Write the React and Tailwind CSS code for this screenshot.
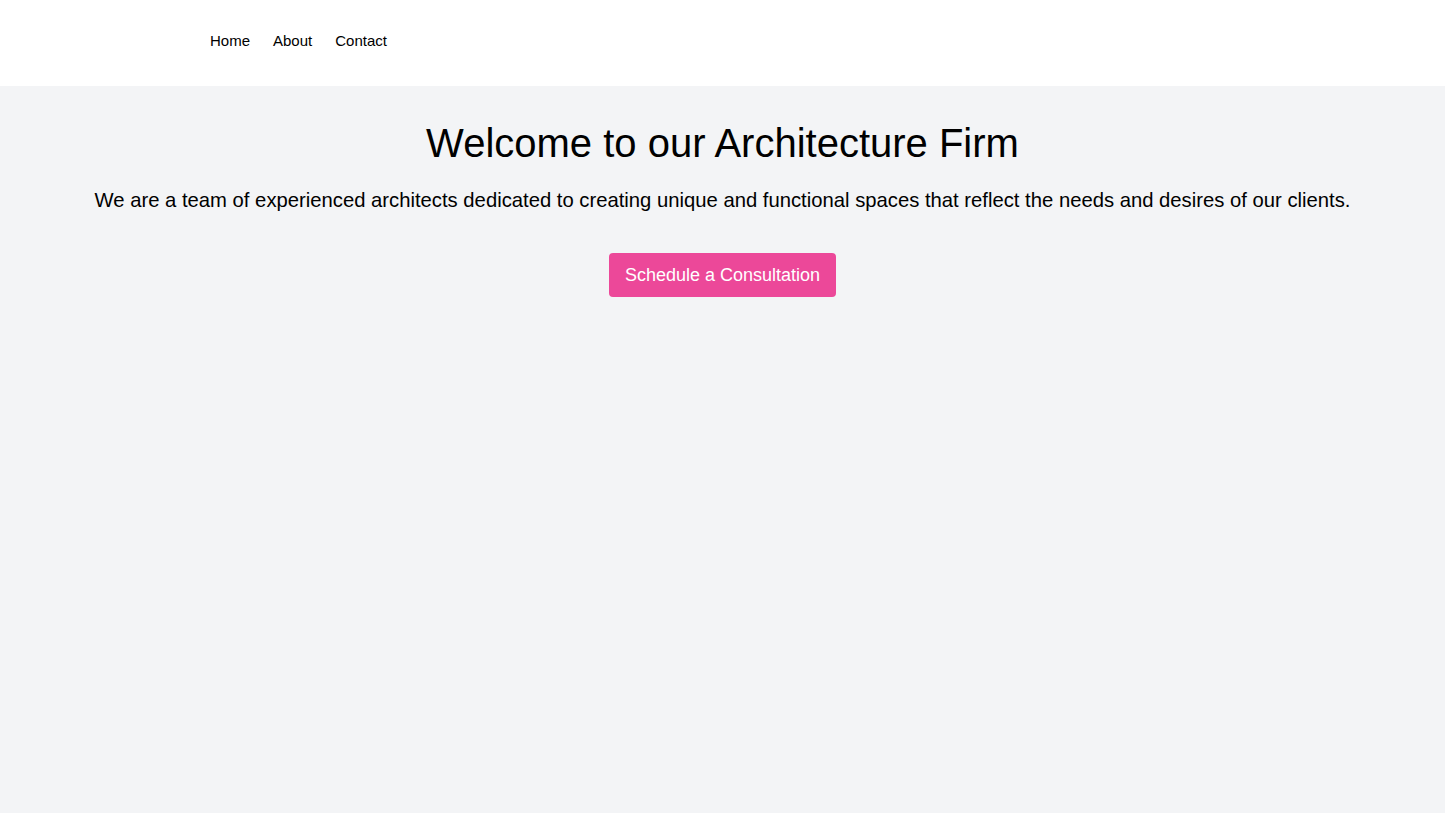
export default function App() {
  return (
    <div className="min-h-screen bg-gray-100 text-black font-['Liberation_Sans',Arial,sans-serif]">
      {/* Header */}
      <header className="bg-white h-[86px] flex items-center">
        <nav className="pl-[210px] flex items-center gap-[23px] text-[15px] -mt-[4px]">
          <a href="#">Home</a>
          <a href="#">About</a>
          <a href="#">Contact</a>
        </nav>
      </header>

      {/* Hero */}
      <main className="px-8 py-8 text-center">
        <h1 className="text-[40px] leading-[50px]">Welcome to our Architecture Firm</h1>
        <p className="mt-[18px] text-[20.25px] leading-7">
          We are a team of experienced architects dedicated to creating unique and functional spaces that reflect the needs and desires of our clients.
        </p>
        <button className="mt-[39px] bg-[#ec4899] text-white text-lg px-4 py-2 rounded">
          Schedule a Consultation
        </button>
      </main>
    </div>
  );
}
